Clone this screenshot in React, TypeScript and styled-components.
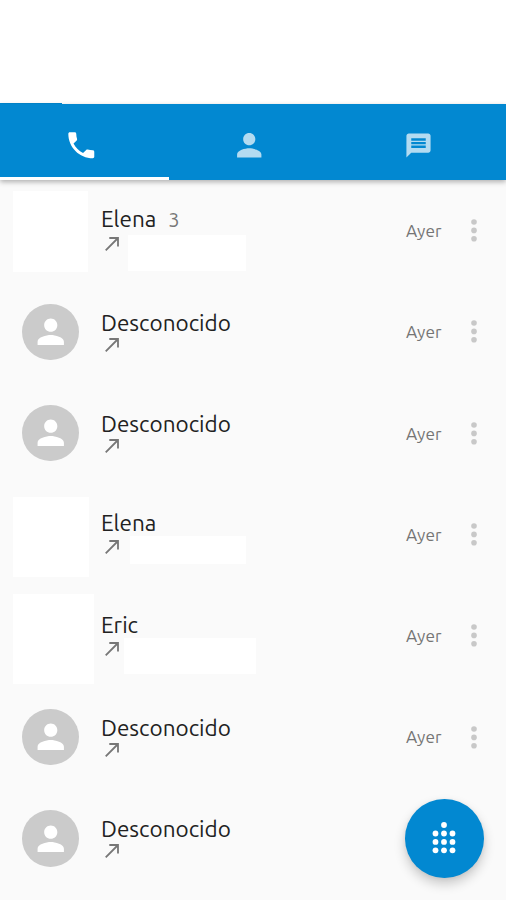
import React from "react";
import styled, { createGlobalStyle } from "styled-components";

const BLUE = "#0288d1";

const GlobalStyle = createGlobalStyle`
  body { margin: 0; background: #fafafa; font-family: Ubuntu, "Noto Sans", sans-serif; }
`;

const Screen = styled.div`
  position: relative;
  width: 506px;
  height: 900px;
  overflow: hidden;
  background: #fafafa;
`;

const StatusArea = styled.div`
  display: flex;
  align-items: flex-end;
  height: 103.5px;
  background: #fff;
`;

const StatusStrip = styled.div`
  width: 61.5px;
  height: 1px;
  background: ${BLUE};
`;

const TabBar = styled.nav`
  position: relative;
  display: grid;
  grid-template-columns: repeat(3, 1fr);
  height: 76.5px;
  background: ${BLUE};
  box-shadow: 0 2px 5px rgba(0, 0, 0, 0.3);
`;

const Tab = styled.button<{ $active?: boolean }>`
  box-sizing: border-box;
  display: flex;
  align-items: center;
  justify-content: center;
  padding: 10px 7px 0 0;
  border: 0;
  border-bottom: 3px solid ${(p) => (p.$active ? "#fff" : "transparent")};
  background: none;
  color: ${(p) => (p.$active ? "#fff" : "#b3dbf1")};
`;

const Glyph = styled.svg<{ $size: number }>`
  display: block;
  flex: none;
  width: ${(p) => p.$size}px;
  height: ${(p) => p.$size}px;
  fill: currentColor;
`;

const Row = styled.li`
  display: grid;
  grid-template-columns: 101px 1fr 68px 64.5px;
  height: 101.3px;
`;

const List = styled.ul`
  margin: 0;
  padding: 0;
  list-style: none;
`;

const Avatar = styled.div`
  display: flex;
  align-items: center;
  justify-content: center;
  align-self: center;
  width: 56.5px;
  height: 56.5px;
  margin-left: 22.3px;
  border-radius: 50%;
  background: #cbcbcb;
  color: #fff;
`;

const PhotoBlank = styled.div<{ $w: number; $h: number; $top: number }>`
  width: ${(p) => p.$w}px;
  height: ${(p) => p.$h}px;
  margin: ${(p) => p.$top}px 0 0 13px;
  background: #fff;
`;

const Info = styled.div`
  display: grid;
  grid-template-rows: 56px 1fr;
`;

const NameLine = styled.div<{ $raised: boolean }>`
  display: flex;
  align-items: baseline;
  height: 30px;
  padding-top: ${(p) => (p.$raised ? 24.4 : 26.4)}px;
  line-height: 30px;
  white-space: nowrap;
`;

const Name = styled.span`
  color: #212121;
  font-size: 22.5px;
`;

const Count = styled.span`
  margin-left: 12px;
  color: #777;
  font-size: 20px;
`;

const Detail = styled.div`
  display: flex;
  align-items: flex-start;
`;

const Arrow = styled.svg`
  flex: none;
  width: 14px;
  height: 14px;
  margin: 0.5px 0 0 3.5px;
  fill: none;
  stroke: #777;
  stroke-width: 1.8;
`;

const NumberBlank = styled.div<{ $w: number; $h: number; $top: number; $left: number }>`
  width: ${(p) => p.$w}px;
  height: ${(p) => p.$h}px;
  margin: ${(p) => p.$top}px 0 0 ${(p) => p.$left}px;
  background: #fff;
`;

const When = styled.time`
  align-self: center;
  justify-self: end;
  padding-top: 0.6px;
  color: #757575;
  font-size: 17.3px;
  line-height: 24px;
`;

const More = styled.button`
  display: flex;
  align-items: center;
  justify-content: center;
  padding: 0;
  border: 0;
  background: none;
  color: #c8c8c8;
`;

const DialButton = styled.button`
  position: absolute;
  right: 22.5px;
  bottom: 22.5px;
  display: flex;
  align-items: center;
  justify-content: center;
  width: 78.7px;
  height: 78.7px;
  padding: 0;
  border: 0;
  border-radius: 50%;
  background: ${BLUE};
  color: #fff;
  box-shadow: 0 6px 12px rgba(0, 0, 0, 0.2), 0 1px 4px rgba(0, 0, 0, 0.06);
`;

const Dots = styled.svg`
  display: block;
  fill: currentColor;
`;

const PERSON =
  "M12 12c2.21 0 4-1.79 4-4s-1.79-4-4-4-4 1.79-4 4 1.79 4 4 4zm0 2c-2.67 0-8 1.34-8 4v2h16v-2c0-2.66-5.33-4-8-4z";
const PHONE =
  "M6.62 10.79c1.44 2.83 3.76 5.14 6.59 6.59l2.2-2.2c.27-.27.67-.36 1.02-.24 1.12.37 2.33.57 3.57.57.55 0 1 .45 1 1V20c0 .55-.45 1-1 1-9.39 0-17-7.61-17-17 0-.55.45-1 1-1h3.5c.55 0 1 .45 1 1 0 1.25.2 2.45.57 3.57.11.35.03.74-.25 1.02l-2.2 2.2z";
const MESSAGE =
  "M20 2H4c-1.1 0-1.99.9-1.99 2L2 22l4-4h14c1.1 0 2-.9 2-2V4c0-1.1-.9-2-2-2zm-2 12H6v-2h12v2zm0-3H6V9h12v2zm0-3H6V6h12v2z";

function Icon({ path, size }: { path: string; size: number }) {
  return (
    <Glyph viewBox="0 0 24 24" $size={size} aria-hidden="true">
      <path d={path} />
    </Glyph>
  );
}

interface Call {
  name: string;
  count?: number;
  photo?: { w: number; h: number; top: number };
  number?: { w: number; h: number; top: number; left: number };
  hideMeta?: boolean;
}

const calls: Call[] = [
  { name: "Elena", count: 3, photo: { w: 75, h: 81, top: 11 }, number: { w: 118, h: 36, top: -1, left: 9.5 } },
  { name: "Desconocido" },
  { name: "Desconocido" },
  { name: "Elena", photo: { w: 76, h: 80.5, top: 12.8 }, number: { w: 116, h: 28, top: -4, left: 11.5 } },
  { name: "Eric", photo: { w: 80.5, h: 90.5, top: 8.5 }, number: { w: 131.5, h: 36, top: -3, left: 5.5 } },
  { name: "Desconocido" },
  { name: "Desconocido", hideMeta: true },
];

function CallRow({ call }: { call: Call }) {
  const { photo, number } = call;
  return (
    <Row>
      {photo ? (
        <PhotoBlank $w={photo.w} $h={photo.h} $top={photo.top} />
      ) : (
        <Avatar>
          <Icon path={PERSON} size={39.5} />
        </Avatar>
      )}
      <Info>
        <NameLine $raised={!!photo}>
          <Name>{call.name}</Name>
          {call.count && <Count>{call.count}</Count>}
        </NameLine>
        <Detail>
          <Arrow viewBox="0 0 14 14">
            <path d="M0.7 13.3 L13 1 M4.3 1 H13 V9.4" />
          </Arrow>
          {number && <NumberBlank $w={number.w} $h={number.h} $top={number.top} $left={number.left} />}
        </Detail>
      </Info>
      {!call.hideMeta && (
        <>
          <When>Ayer</When>
          <More aria-label="Más opciones">
            <Dots width="6" height="23" viewBox="0 0 6 23">
              {[3, 11.4, 19.8].map((y) => (
                <circle key={y} cx="3" cy={y} r="2.8" />
              ))}
            </Dots>
          </More>
        </>
      )}
    </Row>
  );
}

export default function App() {
  return (
    <>
      <GlobalStyle />
      <Screen>
        <StatusArea>
          <StatusStrip />
        </StatusArea>
        <TabBar>
          <Tab $active aria-label="Llamadas">
            <Icon path={PHONE} size={34.6} />
          </Tab>
          <Tab aria-label="Contactos">
            <Icon path={PERSON} size={36.5} />
          </Tab>
          <Tab aria-label="Mensajes">
            <Icon path={MESSAGE} size={29} />
          </Tab>
        </TabBar>
        <List>
          {calls.map((call, i) => (
            <CallRow key={i} call={call} />
          ))}
        </List>
        <DialButton aria-label="Teclado">
          <Dots width="24" height="32" viewBox="0 0 24 32">
            <circle cx="12" cy="3" r="2.9" />
            {[11.5, 19.9, 28.3].map((y) =>
              [3.5, 12, 20.5].map((x) => <circle key={`${x}-${y}`} cx={x} cy={y} r="2.9" />)
            )}
          </Dots>
        </DialButton>
      </Screen>
    </>
  );
}
